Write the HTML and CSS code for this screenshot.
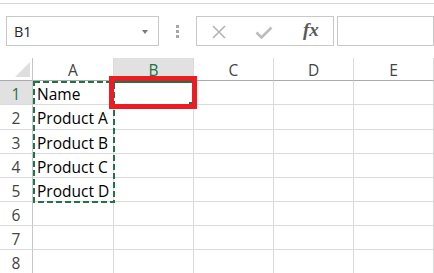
FILE: index.html
```html
<!DOCTYPE html>
<html>
<head>
<meta charset="utf-8">
<link rel="stylesheet" href="styles.css">
</head>
<body>
<div class="topbar"></div>
<div class="formula-row">
  <div class="namebox"><span class="ref">B1</span><span class="caret"></span></div>
  <div class="grip"><i></i><i></i><i></i></div>
  <div class="fxbox">
    <svg class="ico-x" width="14" height="14" viewBox="0 0 14 14"><path d="M1 1L13 13M13 1L1 13" stroke="#b4b4b4" stroke-width="1.6" fill="none"/></svg>
    <svg class="ico-check" width="18" height="13" viewBox="0 0 18 13"><path d="M1.5 6.5L6.5 11.5L16.5 1.5" stroke="#bdbdbd" stroke-width="2.6" fill="none"/></svg>
    <span class="fx">fx</span>
  </div>
  <div class="formula-input"></div>
</div>
<div class="sheet-wrap">
  <div class="sheet">
    <div class="corner"><svg width="17" height="15" viewBox="0 0 17 15"><path d="M17 0V15H2Z" fill="#dedede"/></svg></div>
    <div class="colhdr">A</div>
    <div class="colhdr sel">B</div>
    <div class="colhdr">C</div>
    <div class="colhdr">D</div>
    <div class="colhdr">E</div>

    <div class="rowhdr sel">1</div>
    <div class="cell">Name</div><div class="cell"></div><div class="cell"></div><div class="cell"></div><div class="cell"></div>

    <div class="rowhdr">2</div>
    <div class="cell">Product A</div><div class="cell"></div><div class="cell"></div><div class="cell"></div><div class="cell"></div>

    <div class="rowhdr">3</div>
    <div class="cell">Product B</div><div class="cell"></div><div class="cell"></div><div class="cell"></div><div class="cell"></div>

    <div class="rowhdr">4</div>
    <div class="cell">Product C</div><div class="cell"></div><div class="cell"></div><div class="cell"></div><div class="cell"></div>

    <div class="rowhdr">5</div>
    <div class="cell">Product D</div><div class="cell"></div><div class="cell"></div><div class="cell"></div><div class="cell"></div>

    <div class="rowhdr">6</div>
    <div class="cell"></div><div class="cell"></div><div class="cell"></div><div class="cell"></div><div class="cell"></div>

    <div class="rowhdr">7</div>
    <div class="cell"></div><div class="cell"></div><div class="cell"></div><div class="cell"></div><div class="cell"></div>

    <div class="rowhdr">8</div>
    <div class="cell"></div><div class="cell"></div><div class="cell"></div><div class="cell"></div><div class="cell"></div>
  </div>
  <svg class="ants" width="82" height="122" viewBox="0 0 82 122"><rect x="1" y="1" width="80" height="120" fill="none" stroke="#217346" stroke-width="2" stroke-dasharray="6 3"/></svg>
  <div class="active"></div>
  <div class="handle"></div>
  <div class="highlight"></div>
</div>
</body>
</html>
```

FILE: styles.css
```css
* { box-sizing: border-box; }
html, body { margin: 0; padding: 0; background: #fff; }
body {
  width: 434px;
  height: 273px;
  overflow: hidden;
  font-family: "Open Sans", "Noto Sans", sans-serif;
}

.topbar {
  height: 4px;
  border-bottom: 1px solid #d6d6d6;
}

.formula-row {
  display: flex;
  height: 30px;
  margin-top: 12px;
}

.namebox {
  width: 153px;
  margin-left: 6px;
  border: 1px solid #c8c8c8;
  display: flex;
  align-items: center;
  justify-content: space-between;
  padding: 0 10px 0 7px;
}
.namebox .ref {
  font-size: 14.5px;
  line-height: 27px;
  color: #262626;
}
.caret {
  width: 0;
  height: 0;
  border-left: 3px solid transparent;
  border-right: 3px solid transparent;
  border-top: 4px solid #7a7a7a;
  margin-top: 1px;
}

.grip {
  width: 37px;
  display: flex;
  flex-direction: column;
  align-items: center;
  justify-content: center;
  gap: 2px;
}
.grip i {
  display: block;
  width: 3px;
  height: 3px;
  background: #a6a6a6;
}

.fxbox {
  width: 138px;
  border: 1px solid #c8c8c8;
  display: flex;
  align-items: center;
  padding-left: 15px;
}
.ico-x { margin-top: 1px; }
.ico-check { margin-left: 29px; margin-top: 2px; }
.fx {
  margin-left: 30px;
  font-family: "Liberation Serif", "DejaVu Serif", serif;
  font-style: italic;
  font-weight: bold;
  font-size: 19px;
  line-height: 20px;
  color: #5a5a5a;
  margin-top: -2px;
}

.formula-input {
  flex: 1;
  margin-left: 3px;
  border: 1px solid #c8c8c8;
}

.sheet-wrap {
  position: relative;
  margin-top: 12px;
}

.sheet {
  display: grid;
  grid-template-columns: 33px 81px 80px 80px 80px 80px;
  grid-template-rows: 23px 24px 25px repeat(6, 24px);
}

.sheet > div {
  border-right: 1px solid #dadada;
  border-bottom: 1px solid #dadada;
}

.corner {
  border-bottom-color: #ababab !important;
  border-right-color: #c6c6c6 !important;
  display: flex;
  align-items: flex-end;
  justify-content: flex-end;
  padding: 0 2px 3px 0;
}
.corner svg { display: block; }

.colhdr {
  text-align: center;
  font-size: 15.5px;
  line-height: 22px;
  padding-top: 1px;
  color: #444;
  border-bottom-color: #ababab !important;
}
.colhdr.sel {
  background: #e1e1e1;
  color: #217346;
}

.rowhdr {
  text-align: center;
  font-size: 15.5px;
  line-height: 23px;
  padding-top: 2px;
  color: #444;
  border-right-color: #c6c6c6 !important;
}
.rowhdr.sel {
  background: #e1e1e1;
  color: #217346;
}

.cell {
  font-size: 15.5px;
  line-height: 23px;
  padding-top: 2px;
  padding-left: 4px;
  color: #000;
  white-space: nowrap;
}

.ants {
  position: absolute;
  left: 33px;
  top: 23px;
}

.active {
  position: absolute;
  left: 113px;
  top: 23px;
  width: 80px;
  height: 2px;
  background: #217346;
}

.handle {
  position: absolute;
  left: 189px;
  top: 44px;
  width: 3px;
  height: 3px;
  background: #217346;
}

.highlight {
  position: absolute;
  left: 109px;
  top: 18px;
  width: 88px;
  height: 33px;
  border: 5px solid #ed1c24;
}
```
